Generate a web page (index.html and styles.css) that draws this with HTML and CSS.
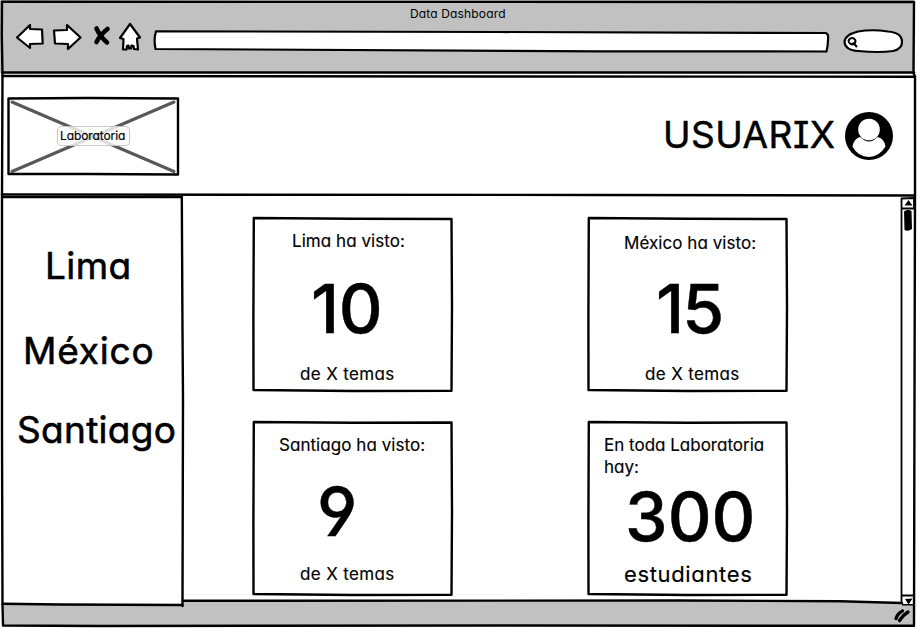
FILE: index.html
```html
<!DOCTYPE html>
<html lang="es">
<head>
<meta charset="utf-8">
<title>Data Dashboard</title>
<link rel="stylesheet" href="styles.css">
</head>
<body>
<div class="window">
  <header class="browser-bar">
    <div class="window-title"><span>Data Dashboard</span></div>
    <svg class="toolbar" width="917" height="50" viewBox="0 22 917 50">
      <g class="ink-shape">
        <path d="M17 37.500L30 25V29L42 29.500L42.700 43.500L30 44V48Z"/>
        <path d="M54 30.500L67 30V25L80.500 37.500L68 49V44L55 43.500Z"/>
        <path d="M130 24L140 37.500L137 38.500L138 49.500L134 49L133.500 46L131.500 45.500L131 48.500L129 48.500L128.500 45.500L127 46L126.500 49.500L123 49.500L123.500 39L120 38Z"/>
        <path d="M156 31.300L500 32L826 33L828 35Q828.500 43 826.500 51.500L600 51.300L155.500 49Q153.500 39 156 31.300Z"/>
        <path d="M858 31.500Q872 29 888 31.500Q902 32.500 902 42Q902 49 893 51Q879 53 858 51Q845 50 844.500 42Q845 34.500 858 31.500Z"/>
      </g>
      <path class="stop" d="M96.500 28.500Q100.500 37 107 42.500M107.500 29Q100 35 96.500 42"/>
      <path class="lens" d="M855 44Q849 45 848.500 41Q850 37 854 38.500Q857.500 42 853 44.500M853.500 43L856.500 46.500"/>
    </svg>
  </header>

  <section class="top">
    <div class="logo">
      <svg class="frame" width="171" height="79" viewBox="0 0 171 79">
        <path class="cross" d="M4 5L166 74.500M166 5L4 74.500"/>
        <path class="frame-line" d="M.5 1.500L80 1L170 1.500V77.500L80 77L.5 77Z"/>
      </svg>
      <span class="logo-label">Laboratoria</span>
    </div>
    <div class="user">
      <span class="user-name">USUARIX</span>
      <svg width="48" height="48" viewBox="0 0 48 48">
        <circle cx="24" cy="24" r="24"/>
        <path class="paper" d="M7.500 34.500Q9 26 15.500 25Q24 34 32.500 25Q39 26 40.500 34.500Q34 45 24 45Q13 45 7.500 34.500Z"/>
        <circle class="paper" cx="24" cy="17.500" r="10.800"/>
      </svg>
    </div>
  </section>

  <div class="body">
    <nav class="sidebar">
      <a class="lima">Lima</a>
      <a class="mexico">México</a>
      <a class="santiago">Santiago</a>
    </nav>
    <main class="cards">
      <article class="card">
        <svg class="frame" width="200" height="175" viewBox="0 0 200 175"><path class="frame-line" d="M.8 1L100 1.800L198.500 2L199 90L198.500 173.800L100 174L.5 173L.4 100Z"/></svg>
        <p class="caption c1">Lima ha visto:</p>
        <p class="number n1">10</p>
        <p class="foot f1">de X temas</p>
      </article>
      <article class="card">
        <svg class="frame" width="200" height="175" viewBox="0 0 200 175"><path class="frame-line" d="M.8 1L100 1.800L198.500 2L199 90L198.500 173.800L100 174L.5 173L.4 100Z"/></svg>
        <p class="caption c2">México ha visto:</p>
        <p class="number n2">15</p>
        <p class="foot f2">de X temas</p>
      </article>
      <article class="card">
        <svg class="frame" width="200" height="175" viewBox="0 0 200 175"><path class="frame-line" d="M.8 1L100 1.800L198.500 1.500L199 90L198.500 173.800L100 174L.5 173L.4 100Z"/></svg>
        <p class="caption c3">Santiago ha visto:</p>
        <p class="number n3">9</p>
        <p class="foot f3">de X temas</p>
      </article>
      <article class="card">
        <svg class="frame" width="200" height="175" viewBox="0 0 200 175"><path class="frame-line" d="M.8 1L100 1.800L198.500 1.500L199 90L198.500 173.800L100 174L.5 173L.4 100Z"/></svg>
        <p class="caption c4">En toda Laboratoria<br>hay:</p>
        <p class="number n4">300</p>
        <p class="foot f4">estudiantes</p>
      </article>
    </main>
    <svg class="scrollbar" width="16" height="412" viewBox="900 196 16 412">
      <path class="thin" d="M901.500 198.500L914 198V208.500H901.500ZM901.500 208V595.500M901.500 595.500H914M901.500 595.500V605H914"/>
      <path d="M904.500 205.500L908.500 200L912.500 205.500ZM905 599L912.500 598.500L908.500 604.500ZM904 211.500Q908 209 911.500 211L912 229Q908 232 904.500 230Z"/>
    </svg>
  </div>

  <svg class="outline" width="917" height="628" viewBox="0 0 917 628">
    <path class="status" d="M2.500 604.500L182 605.500L183 601H500L700 600.500L902 603V605.500H914V625L500 625.500L3 625.500Z"/>
    <path class="frame-line" d="M2.500 603.800L60 604.500L182.500 605M183 600.800L680 600.500L840 601.200L902 603"/>
    <path class="frame-line" d="M2 1.800L914 2L913.500 73L915 76.500V195L914.500 400L914 625.800L500 625.500L100 626L3 625.500L2.500 604L2 430V195L2.500 75L1.800 35Z"/>
    <path class="frame-line" d="M2.500 72.500H914"/>
    <path class="frame-line" d="M2.500 76L500 76.500L915 76.700M2 194.500L600 195L914 195.500M3 197H182M181.800 197L182.500 330L183 400L182.500 606"/>
    <path class="grip" d="M896 618.500Q898 613 902.500 611M899.500 620.500Q903 615 908 612"/>
  </svg>
</div>
</body>
</html>
```
FILE: styles.css
```css
* { box-sizing: border-box; }
body {
  margin: 0;
  background: #fff;
  color: #000;
  font-family: Inter, "Liberation Sans", sans-serif;
  font-feature-settings: "cv11", "cv08", "cv04", "calt" 0;
}
p { margin: 0; white-space: nowrap; }
svg { display: block; flex: none; }

.window { position: relative; width: 917px; height: 628px; overflow: hidden; }
.outline, .frame { position: absolute; left: 0; top: 0; overflow: visible; pointer-events: none; }

.frame-line, .thin { fill: none; stroke: #000; stroke-width: 2.4; stroke-linejoin: round; stroke-linecap: round; }
.thin { stroke-width: 1.8; }
.paper { fill: #fff; }
.status { fill: #c1c1c1; }
.grip { fill: none; stroke: #000; stroke-width: 3.4; stroke-linecap: round; }

.browser-bar { width: 914px; height: 73px; padding-top: 2px; background: #c1c1c1; }
.window-title { height: 20px; padding-left: 410px; line-height: 23px; font-size: 12px; letter-spacing: .15px; }
.ink-shape { fill: #fff; stroke: #000; stroke-width: 2.2; stroke-linejoin: round; }
.stop { fill: none; stroke: #000; stroke-width: 4.6; stroke-linecap: round; }
.lens { fill: none; stroke: #000; stroke-width: 2; stroke-linecap: round; }

.top { display: flex; justify-content: space-between; height: 122px; padding: 24px 24px 0 8px; }
.logo { position: relative; display: flex; align-items: center; justify-content: center; width: 171px; height: 79px; }
.cross { fill: none; stroke: #585858; stroke-width: 3; stroke-linecap: round; }
.logo-label {
  z-index: 1; width: 73px; height: 20px; margin-top: -1px; padding-left: 2px;
  border: 1px solid #c8c8c8; border-radius: 4px; background: rgba(255, 255, 255, .8);
  font-size: 12px; line-height: 17px; letter-spacing: -.1px; white-space: nowrap;
  -webkit-text-stroke: .2px #000;
}
.user { display: flex; align-items: center; gap: 10px; height: 48px; margin-top: 15px; }
.user-name { width: 172px; margin-top: -3px; font-size: 37px; line-height: 44px; letter-spacing: .5px; white-space: nowrap; -webkit-text-stroke: .5px #000; }

.body { display: flex; height: 412px; margin-top: 1px; }
.sidebar { display: flex; flex-direction: column; width: 183px; height: 408px; padding-top: 48px; font-size: 37px; line-height: 44px; white-space: nowrap; -webkit-text-stroke: .6px #000; }
.lima { padding-left: 45px; letter-spacing: .4px; }
.mexico { margin-top: 41px; padding-left: 23px; letter-spacing: .8px; }
.santiago { margin-top: 35px; padding-left: 17px; letter-spacing: .3px; }

.cards { display: grid; grid-template-columns: 200px 200px; grid-auto-rows: 175px; gap: 29px 135px; align-content: start; width: 717px; padding: 21px 0 0 70px; }
.card { position: relative; display: flex; flex-direction: column; font-size: 17px; line-height: 22px; -webkit-text-stroke: .15px #000; }
.caption { height: 22px; margin-top: 13px; }
.number { font-size: 68px; font-weight: 500; line-height: 70px; -webkit-text-stroke: .4px #000; }
.c1 { padding-left: 39px; letter-spacing: .05px; }
.c2 { padding-left: 36px; margin-top: 15px; letter-spacing: .05px; }
.c3 { padding-left: 26px; letter-spacing: .05px; }
.c4 { padding-left: 16px; height: 44px; }
.n1 { margin-top: 21px; padding-left: 58px; letter-spacing: -.5px; }
.n2 { margin-top: 19px; padding-left: 68px; letter-spacing: -2px; }
.n3 { margin-top: 20px; padding-left: 64px; }
.n4 { margin-top: 3px; padding-left: 37px; }
.f1 { margin-top: 20px; padding-left: 47px; letter-spacing: .35px; }
.f2 { margin-top: 20px; padding-left: 57px; letter-spacing: .35px; }
.f3 { margin-top: 17px; padding-left: 47px; letter-spacing: .35px; }
.f4 { margin-top: 12px; padding-left: 36px; font-size: 22px; letter-spacing: .65px; }
```
